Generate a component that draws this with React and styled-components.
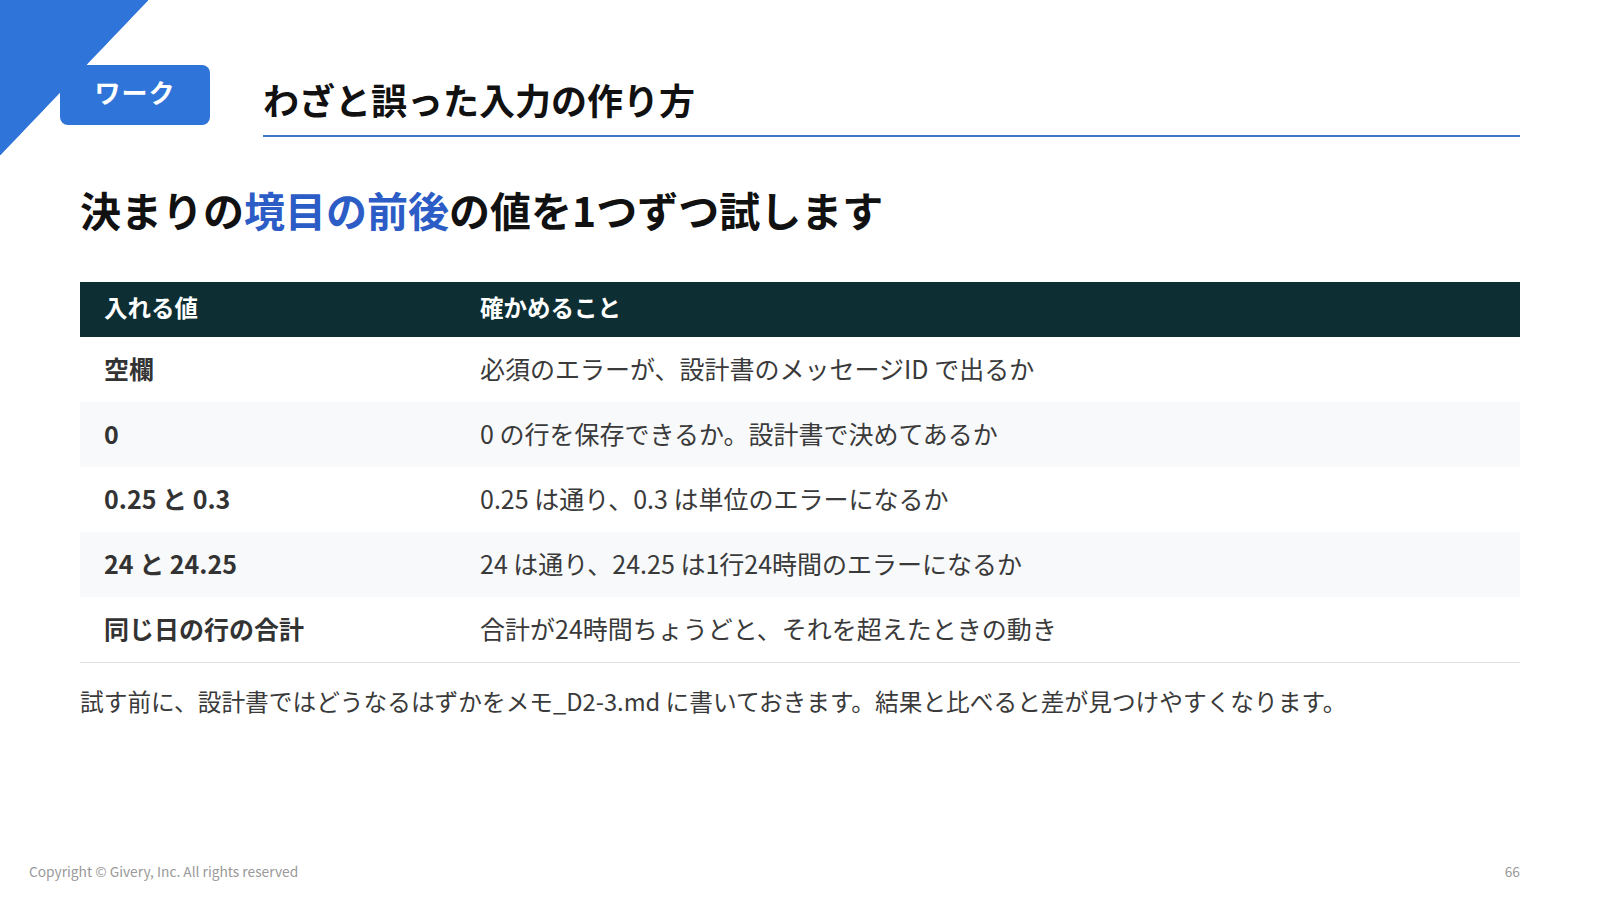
import React from 'react'
import styled, { createGlobalStyle } from 'styled-components'

const Global = createGlobalStyle`
  html, body {
    margin:0;
    padding:0;
    background:#fff;
  }
  body {
    font-family:"Noto Sans CJK JP", "Noto Sans", sans-serif;
    color:#333;
  }
`

const rows = [
  { value: '空欄', check: '必須のエラーが、設計書のメッセージID で出るか' },
  { value: '0', check: '0 の行を保存できるか。設計書で決めてあるか' },
  { value: '0.25 と 0.3', check: '0.25 は通り、0.3 は単位のエラーになるか' },
  { value: '24 と 24.25', check: '24 は通り、24.25 は1行24時間のエラーになるか' },
  { value: '同じ日の行の合計', check: '合計が24時間ちょうどと、それを超えたときの動き' },
]

export default function App() {
  return <Slide>
    <Global />
    <Header>
      <Badge>ワーク</Badge>
      <TitleWrap>
        <Title>わざと誤った入力の作り方</Title>
      </TitleWrap>
    </Header>

    <Main>
      <Lead>決まりの<Accent>境目の前後</Accent>の値を1つずつ試します</Lead>

      <Table>
        <HeadRow>
          <HeadCell>入れる値</HeadCell>
          <HeadCell>確かめること</HeadCell>
        </HeadRow>
        {rows.map((r, i) => (
          <Row key={r.value} striped={i % 2 === 1} last={i === rows.length - 1}>
            <ValueCell>{r.value}</ValueCell>
            <CheckCell>{r.check}</CheckCell>
          </Row>
        ))}
      </Table>

      <Note>試す前に、設計書ではどうなるはずかをメモ_D2-3.md に書いておきます。結果と比べると差が見つけやすくなります。</Note>
    </Main>

    <Footer>
      <span>Copyright © Givery, Inc. All rights reserved</span>
      <span>66</span>
    </Footer>
  </Slide>
}

const Slide = styled.div`
  width:1600px;
  height:900px;
  overflow:hidden;
  display:flex;
  flex-direction:column;
  background:
    linear-gradient(to bottom right, #2f74d8 50%, transparent 50.4%) no-repeat 0 0 / 148px 155px,
    #fff;
`
const Header = styled.div`
  display:flex;
  align-items:flex-start;
  padding:65px 80px 0 60px;
`
const Badge = styled.div`
  width:150px;
  height:60px;
  box-sizing:border-box;
  padding-bottom:8px;
  border-radius:8px;
  background:#2f74d8;
  color:#fff;
  font-size:26px;
  font-weight:700;
  letter-spacing:1px;
  display:flex;
  align-items:center;
  justify-content:center;
  flex-shrink:0;
`
const TitleWrap = styled.div`
  flex:1;
  margin-left:53px;
  padding:7px 0 9px 0;
  border-bottom:2px solid #3b78c2;
`
const Title = styled.h1`
  margin:0;
  font-size:36px;
  line-height:54px;
  font-weight:700;
  color:#111;
`
const Main = styled.div`
  padding:0 80px;
  display:flex;
  flex-direction:column;
`
const Lead = styled.h2`
  margin:43px 0 0 0;
  font-size:41px;
  line-height:58px;
  font-weight:700;
  color:#111;
`
const Accent = styled.span`
  color:#2c5cc6;
`
const Table = styled.div`
  margin-top:44px;
  display:flex;
  flex-direction:column;
`
const HeadRow = styled.div`
  display:grid;
  grid-template-columns:376px 1fr;
  height:55px;
  align-items:center;
  background:#0d2e33;
`
const HeadCell = styled.div`
  padding:0 0 6px 24px;
  color:#fff;
  font-size:23.5px;
  font-weight:700;
`
const Row = styled.div`
  display:grid;
  grid-template-columns:376px 1fr;
  box-sizing:border-box;
  align-items:center;
  background:${p => p.striped ? '#f8f9fa' : '#fff'};
  border-bottom:${p => p.last ? '1px solid #e2e2e2' : 'none'};
  height:${p => p.last ? '66px' : '65px'};
`
const ValueCell = styled.div`
  padding:0 0 4px 24px;
  font-size:25px;
  font-weight:700;
  color:#333;
`
const CheckCell = styled.div`
  padding:0 0 4px 24px;
  font-size:25px;
  color:#3a3a3a;
`
const Note = styled.p`
  margin:19px 0 0 0;
  font-size:23.7px;
  line-height:38px;
  color:#3a3a3a;
`
const Footer = styled.div`
  margin-top:auto;
  display:flex;
  justify-content:space-between;
  align-items:center;
  padding:0 80px 19px 29px;
  font-size:13.75px;
  line-height:20px;
  color:#999;
`
